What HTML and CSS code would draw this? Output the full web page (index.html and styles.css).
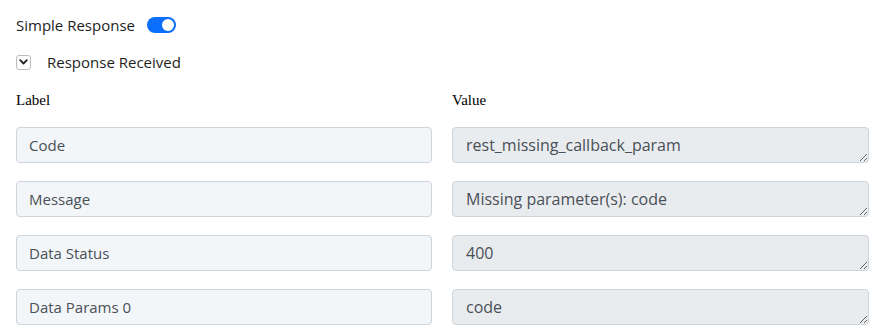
FILE: index.html
```html
<!DOCTYPE html>
<html>
<head>
<meta charset="utf-8">
<link rel="stylesheet" href="styles.css">
</head>
<body>
<div class="page">
  <div class="toggle-row">
    <span class="toggle-label">Simple Response</span>
    <span class="switch"><span class="knob"></span></span>
  </div>
  <div class="collapse-row">
    <span class="chev-box">
      <svg width="9" height="6" viewBox="0 0 9 6"><path d="M1.2 1.2 L4.5 4.5 L7.8 1.2" fill="none" stroke="#222" stroke-width="1.8" stroke-linecap="round" stroke-linejoin="round"/></svg>
    </span>
    <span class="collapse-label">Response Received</span>
  </div>
  <div class="grid">
    <div class="head">Label</div>
    <div class="head">Value</div>
    <div class="field">Code</div>
    <textarea class="value" disabled>rest_missing_callback_param</textarea>
    <div class="field">Message</div>
    <textarea class="value" disabled>Missing parameter(s): code</textarea>
    <div class="field">Data Status</div>
    <textarea class="value" disabled>400</textarea>
    <div class="field">Data Params 0</div>
    <textarea class="value" disabled>code</textarea>
  </div>
</div>
</body>
</html>
```
FILE: styles.css
```css
html, body {
  margin: 0;
  padding: 0;
  background: #fff;
}
.page {
  padding: 14px 17px 0 16px;
  font-family: "Segoe UI", "Open Sans", "Noto Sans", sans-serif;
  color: #1e1e1e;
}
.toggle-row {
  display: flex;
  align-items: center;
  height: 22px;
  font-size: 15px;
}
.toggle-label {
  margin-right: 12px;
}
.switch {
  width: 29px;
  height: 16px;
  border-radius: 8px;
  background: #0b6ffc;
  display: flex;
  align-items: center;
  justify-content: flex-end;
  padding-right: 2px;
  box-sizing: border-box;
}
.knob {
  width: 12px;
  height: 12px;
  border-radius: 50%;
  background: #fff;
}
.collapse-row {
  display: flex;
  align-items: center;
  margin-top: 15px;
  height: 22px;
  font-size: 15px;
}
.chev-box {
  width: 15px;
  height: 15px;
  box-sizing: border-box;
  border: 1px solid #b9bec5;
  border-radius: 3px;
  display: flex;
  align-items: center;
  justify-content: center;
  margin-right: 16px;
}
.grid {
  display: grid;
  grid-template-columns: 416px 417px;
  column-gap: 20px;
  row-gap: 18px;
  margin-top: 19px;
}
.head {
  font-family: "Liberation Serif", serif;
  font-size: 15px;
  color: #000;
  height: 19px;
  margin-bottom: -2px;
}
.field, .value {
  height: 36px;
  box-sizing: border-box;
  border: 1px solid #ced4da;
  border-radius: 4px;
  font-family: "Segoe UI", "Open Sans", "Noto Sans", sans-serif;
  color: #495057;
}
.field {
  background: #f3f6f9;
  padding: 6px 12px;
  line-height: 22px;
  font-size: 15px;
}
.value {
  background: #e9ecef;
  padding: 5px 13px;
  line-height: 24px;
  font-size: 16px;
  resize: vertical;
  width: 100%;
  margin: 0;
  display: block;
  overflow: hidden;
}
```
